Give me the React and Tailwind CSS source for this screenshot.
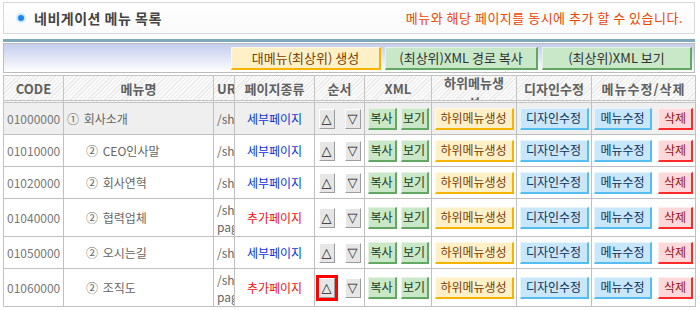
import React from "react";

const rows = [
  { code: "01000000", mark: "①", name: "회사소개", url: ["/shop/company"], type: "세부페이지", top: true },
  { code: "01010000", mark: "②", name: "CEO인사말", url: ["/shop/ceo"], type: "세부페이지" },
  { code: "01020000", mark: "②", name: "회사연혁", url: ["/shop/history"], type: "세부페이지" },
  { code: "01040000", mark: "②", name: "협력업체", url: ["/shop/", "page_partner"], type: "추가페이지" },
  { code: "01050000", mark: "②", name: "오시는길", url: ["/shop/map"], type: "세부페이지" },
  { code: "01060000", mark: "②", name: "조직도", url: ["/shop/", "page_org"], type: "추가페이지", marked: true },
];

const tones = {
  orange: "bg-[#fff0c8] border-t-[#fff8e4] border-l-[#fff8e4] border-r-[#f5b400] border-b-[#f5b400] text-[#7a3c00]",
  green: "bg-[#c8e8c8] border-t-[#e4f3e4] border-l-[#e4f3e4] border-r-[#62a862] border-b-[#62a862] text-[#1c3a1c]",
  blue: "bg-[#c9e7fb] border-t-[#e6f4fe] border-l-[#e6f4fe] border-r-[#55bdf0] border-b-[#55bdf0] text-[#10305a]",
  red: "bg-[#ffd9d9] border-t-[#ffeeee] border-l-[#ffeeee] border-r-[#ff2a2a] border-b-[#ff2a2a] text-[#9a1010]",
};

const Btn = ({ tone, className = "", children }) => (
  <span
    className={`inline-flex h-[22px] items-center justify-center border border-r-2 border-b-2 text-[12px] leading-none whitespace-nowrap ${tones[tone]} ${className}`}
  >
    {children}
  </span>
);

const OrderBtn = ({ children, marked }) => (
  <span
    className={`inline-flex h-[20px] w-[16px] items-center justify-center border border-t-white border-l-white border-r-[#9c9c9c] border-b-[#9c9c9c] bg-[#e6e6e6] font-['DejaVu_Sans',sans-serif] text-[13px] leading-none text-[#222] ${marked ? "outline-3 outline-[#ff0000]" : ""}`}
  >
    {children}
  </span>
);

const headers = [
  { label: "CODE", cls: "text-[#59627a]" },
  { label: "메뉴명" },
  { label: "URL", clip: true },
  { label: "페이지종류" },
  { label: "순서" },
  { label: "XML", cls: "text-[#59627a]" },
  { label: "하위메뉴생성", wrap: true },
  { label: "디자인수정" },
  { label: "메뉴수정/삭제", cls: "tracking-[1px]" },
];

export default function App() {
  return (
    <div className="w-[700px] h-[310px] overflow-hidden bg-white pl-[3px] pt-[2px] font-['Noto_Sans_CJK_KR','Noto_Sans',sans-serif] text-[12px]">
      {/* title */}
      <div className="flex h-[32px] w-[692px] items-center justify-between border border-[#d9d9d9] bg-gradient-to-b from-white to-[#fafafa] pl-[14px] pr-[11px]">
        <div className="flex items-center gap-[10px]">
          <span className="h-[6px] w-[6px] rounded-full bg-[#1a86f0] ring-2 ring-[#cfe6fb]" />
          <span className="text-[14px] font-bold tracking-[0.5px] text-[#444]">네비게이션 메뉴 목록</span>
        </div>
        <span className="text-[13px] tracking-[0.5px] text-[#ee4400]">메뉴와 해당 페이지를 동시에 추가 할 수 있습니다.</span>
      </div>

      {/* toolbar */}
      <div className="mt-[5px] h-[3px] w-[692px] bg-[#7ea9b8]" />
      <div className="mt-[1px] flex h-[30px] w-[692px] items-center justify-end gap-[4px] border border-[#bcbcbc] bg-gradient-to-b from-[#c4cdec] to-white pr-[2px]">
        <Btn tone="orange" className="h-[23px] w-[150px] text-[13px] text-[#6a3200]">대메뉴(최상위) 생성</Btn>
        <Btn tone="green" className="h-[23px] w-[153px] text-[13px] text-[#333]">(최상위)XML 경로 복사</Btn>
        <Btn tone="green" className="h-[23px] w-[150px] text-[13px] text-[#333]">(최상위)XML 보기</Btn>
      </div>

      {/* table */}
      <table className="mt-[2px] w-[692px] table-fixed border-separate border-spacing-0 border-t border-l border-[#c4c4c4]">
        <colgroup>
          <col className="w-[60px]" />
          <col className="w-[150px]" />
          <col className="w-[21px]" />
          <col className="w-[80px]" />
          <col className="w-[50px]" />
          <col className="w-[67px]" />
          <col className="w-[85px]" />
          <col className="w-[75px]" />
          <col className="w-[104px]" />
        </colgroup>
        <thead>
          <tr>
            {headers.map((h) => (
              <th
                key={h.label}
                className="h-[27px] border-r border-b-[3px] border-double border-[#c4c4c4] bg-[repeating-linear-gradient(135deg,#ebebeb_0px,#ebebeb_1px,#f9f9f9_1px,#f9f9f9_3px)] p-0"
              >
                <div
                  className={`h-[24px] overflow-hidden text-[13px] font-bold text-[#606060] ${h.cls || ""} ${
                    h.wrap ? "leading-[20px]" : "flex items-center leading-none"
                  } ${h.clip ? "justify-start pl-[3px] whitespace-nowrap" : "justify-center"}`}
                >
                  {h.wrap ? (
                    <div className="-mt-[3px]">
                      하위메뉴생
                      <br />성
                    </div>
                  ) : (
                    h.label
                  )}
                </div>
              </th>
            ))}
          </tr>
        </thead>
        <tbody>
          {rows.map((r) => {
            const bg = r.top ? "bg-[#efefef]" : "bg-white";
            const td = `border-r border-b border-[#c0c0c0] p-0 align-middle ${bg}`;
            const h = r.url.length > 1 ? "h-[38px]" : "h-[32px]";
            return (
              <tr key={r.code}>
                <td className={`${td} ${h} pl-[3px] text-[#777]`}>{r.code}</td>
                <td className={`${td} text-[#666] ${r.top ? "pl-[3px]" : "pl-[22px]"}`}>
                  {r.mark} <span className="ml-[2px]">{r.name}</span>
                </td>
                <td className={td}>
                  <div className="w-[20px] overflow-hidden pl-[3px] leading-[17px] whitespace-nowrap text-[#666]">
                    {r.url.map((u) => (
                      <div key={u}>{u}</div>
                    ))}
                  </div>
                </td>
                <td
                  className={`${td} text-center text-[12px] ${
                    r.type === "세부페이지" ? "text-[#0a33d6]" : "text-[#f01010]"
                  }`}
                >
                  {r.type}
                </td>
                <td className={td}>
                  <div className="flex items-center justify-center gap-[10px]">
                    <OrderBtn marked={r.marked}>△</OrderBtn>
                    <OrderBtn>▽</OrderBtn>
                  </div>
                </td>
                <td className={td}>
                  <div className="flex items-center justify-center gap-[4px]">
                    <Btn tone="green" className="w-[29px]">복사</Btn>
                    <Btn tone="green" className="w-[28px]">보기</Btn>
                  </div>
                </td>
                <td className={td}>
                  <div className="flex justify-center">
                    <Btn tone="orange" className="w-[79px]">하위메뉴생성</Btn>
                  </div>
                </td>
                <td className={td}>
                  <div className="flex justify-center">
                    <Btn tone="blue" className="w-[69px]">디자인수정</Btn>
                  </div>
                </td>
                <td className={td}>
                  <div className="flex items-center justify-center gap-[6px]">
                    <Btn tone="blue" className="w-[58px]">메뉴수정</Btn>
                    <Btn tone="red" className="w-[35px]">삭제</Btn>
                  </div>
                </td>
              </tr>
            );
          })}
        </tbody>
      </table>
    </div>
  );
}
